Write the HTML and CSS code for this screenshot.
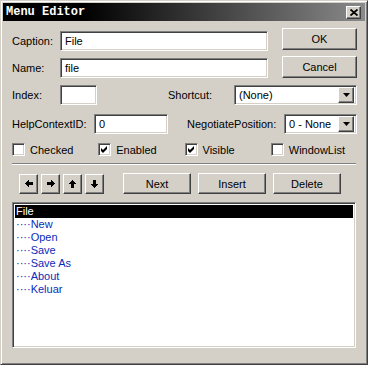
FILE: index.html
```html
<!DOCTYPE html>
<html lang="en">
<head>
  <meta charset="UTF-8">
  <title>Menu Editor</title>
  <link rel="stylesheet" href="styles.css">
</head>
<body>

<div class="window">
  <!-- Title bar -->
  <div class="titlebar">
    <span class="title">Menu Editor</span>
    <span class="close raised">
      <svg width="8" height="7" viewBox="0 0 8 7"><path d="M0.5 0.5 L7.5 6.5 M7.5 0.5 L0.5 6.5" stroke="#000" stroke-width="1.8"/></svg>
    </span>
  </div>

  <div class="content">
    <!-- Caption / Name + OK / Cancel -->
    <div class="row-top">
      <div class="fields">
        <div class="field">
          <span class="lbl lbl-cap">Caption:</span>
          <div class="edit sunken edit-cap">File</div>
        </div>
        <div class="field">
          <span class="lbl lbl-cap">Name:</span>
          <div class="edit sunken edit-cap">file</div>
        </div>
      </div>
      <div class="btn-col">
        <div class="btn raised btn-big">OK</div>
        <div class="btn raised btn-big">Cancel</div>
      </div>
    </div>

    <!-- Index / Shortcut -->
    <div class="row row-index">
      <span class="lbl lbl-cap">Index:</span>
      <div class="edit sunken edit-index"></div>
      <span class="lbl lbl-short">Shortcut:</span>
      <div class="combo sunken combo-short">
        <span class="combo-text">(None)</span>
        <span class="drop raised">
          <svg width="7" height="4" viewBox="0 0 7 4"><path d="M0 0 H7 L3.5 4 Z"/></svg>
        </span>
      </div>
    </div>

    <!-- HelpContextID / NegotiatePosition -->
    <div class="row row-help">
      <span class="lbl lbl-help">HelpContextID:</span>
      <div class="edit sunken edit-help">0</div>
      <span class="lbl lbl-neg">NegotiatePosition:</span>
      <div class="combo sunken combo-neg">
        <span class="combo-text">0 - None</span>
        <span class="drop raised">
          <svg width="7" height="4" viewBox="0 0 7 4"><path d="M0 0 H7 L3.5 4 Z"/></svg>
        </span>
      </div>
    </div>

    <!-- Checkboxes -->
    <div class="row row-checks">
      <div class="check"><span class="box sunken"></span>Checked</div>
      <div class="check"><span class="box sunken"><svg width="7" height="7" viewBox="0 0 7 7"><path d="M0 2 L2 4 L6 0 V3 L2 7 L0 5 Z"/></svg></span>Enabled</div>
      <div class="check"><span class="box sunken"><svg width="7" height="7" viewBox="0 0 7 7"><path d="M0 2 L2 4 L6 0 V3 L2 7 L0 5 Z"/></svg></span>Visible</div>
      <div class="check"><span class="box sunken"></span>WindowList</div>
    </div>

    <div class="separator"></div>

    <!-- Arrow buttons and Next / Insert / Delete -->
    <div class="row row-buttons">
      <div class="arrows">
        <div class="btn raised btn-arrow"><svg width="8" height="7" viewBox="0 0 8 7" shape-rendering="crispEdges"><path d="M0 3.5 L4 0 V2 H8 V5 H4 V7 Z"/></svg></div>
        <div class="btn raised btn-arrow"><svg width="8" height="7" viewBox="0 0 8 7" shape-rendering="crispEdges"><path d="M8 3.5 L4 0 V2 H0 V5 H4 V7 Z"/></svg></div>
        <div class="btn raised btn-arrow"><svg width="7" height="8" viewBox="0 0 7 8" shape-rendering="crispEdges"><path d="M3.5 0 L7 4 H5 V8 H2 V4 H0 Z"/></svg></div>
        <div class="btn raised btn-arrow"><svg width="7" height="8" viewBox="0 0 7 8" shape-rendering="crispEdges"><path d="M3.5 8 L7 4 H5 V0 H2 V4 H0 Z"/></svg></div>
      </div>
      <div class="actions">
        <div class="btn raised btn-mid">Next</div>
        <div class="btn raised btn-mid">Insert</div>
        <div class="btn raised btn-mid">Delete</div>
      </div>
    </div>

    <!-- Menu list -->
    <div class="list sunken">
      <div class="item selected">File</div>
      <div class="item">····New</div>
      <div class="item">····Open</div>
      <div class="item">····Save</div>
      <div class="item">····Save As</div>
      <div class="item">····About</div>
      <div class="item">····Keluar</div>
    </div>
  </div>
</div>

</body>
</html>
```

FILE: styles.css
```css
/* Reset */
html, body {
  margin: 0;
  padding: 0;
  background: #ffffff;
}

* {
  box-sizing: border-box;
}

/* Window frame */
.window {
  width: 368px;
  height: 365px;
  background: #d4d0c8;
  border: 1px solid;
  border-color: #d4d0c8 #404040 #404040 #d4d0c8;
  box-shadow: inset 1px 1px #ffffff, inset -1px -1px #808080;
  padding: 2px;
  font-family: "Liberation Sans", Arial, sans-serif;
  font-size: 11px;
  color: #000000;
}

/* 3D borders */
.raised {
  background: #d4d0c8;
  border: 1px solid;
  border-color: #ffffff #404040 #404040 #ffffff;
  box-shadow: inset -1px -1px #808080;
}

.sunken {
  background: #ffffff;
  border: 1px solid;
  border-color: #808080 #ffffff #ffffff #808080;
  box-shadow: inset 1px 1px #404040, inset -1px -1px #d4d0c8;
}

/* Title bar */
.titlebar {
  height: 18px;
  display: flex;
  align-items: center;
  justify-content: space-between;
  background: linear-gradient(to right, #000000 22%, #8a8a8a 100%);
  padding: 0 4px 0 3px;
}

.title {
  font-family: "Liberation Mono", monospace;
  font-weight: bold;
  font-size: 12px;
  color: #ffffff;
}

.close {
  width: 15px;
  height: 13px;
  display: flex;
  align-items: center;
  justify-content: center;
}

/* Content area */
.content {
  padding: 7px 8px 0 9px;
}

.row {
  display: flex;
  align-items: center;
}

.lbl {
  white-space: nowrap;
}

.lbl-cap { width: 48px; }
.lbl-help { width: 82px; }
.lbl-short { width: 66px; margin-left: 71px; }
.lbl-neg { width: 97px; margin-left: 19px; }

.edit {
  height: 20px;
  padding: 0 4px;
  display: flex;
  align-items: center;
}

.edit-cap { width: 208px; }
.edit-index { width: 37px; }
.edit-help { width: 74px; }

/* Caption / Name block */
.row-top {
  display: flex;
  justify-content: space-between;
}

.fields {
  display: flex;
  flex-direction: column;
  gap: 7px;
  padding-top: 3px;
}

.field {
  display: flex;
  align-items: center;
}

.btn-col {
  display: flex;
  flex-direction: column;
  gap: 6px;
}

.btn {
  display: flex;
  align-items: center;
  justify-content: center;
}

.btn-big {
  width: 75px;
  height: 22px;
}

/* Combo boxes */
.combo {
  height: 20px;
  display: flex;
  align-items: center;
  justify-content: space-between;
  padding: 2px 2px 2px 4px;
}

.combo-short { width: 123px; }
.combo-neg { width: 73px; }

.drop {
  width: 16px;
  height: 16px;
  display: flex;
  align-items: center;
  justify-content: center;
}

.row-index { margin-top: 7px; }
.row-help { margin-top: 9px; }

/* Checkboxes */
.row-checks { margin-top: 9px; }

.check {
  width: 87px;
  display: flex;
  align-items: center;
}

.box {
  width: 13px;
  height: 13px;
  margin-right: 5px;
  display: flex;
  align-items: center;
  justify-content: center;
}

.separator {
  margin-top: 7px;
  width: 344px;
  height: 2px;
  border-top: 1px solid #808080;
  border-bottom: 1px solid #ffffff;
}

/* Button row */
.row-buttons { margin-top: 8px; }

.arrows {
  display: flex;
  gap: 3px;
  margin-left: 7px;
}

.btn-arrow {
  width: 19px;
  height: 20px;
}

.actions {
  display: flex;
  gap: 7px;
  margin-left: 19px;
}

.btn-mid {
  width: 68px;
  height: 21px;
}

/* List */
.list {
  margin-top: 8px;
  width: 344px;
  height: 146px;
  padding: 2px;
}

.item {
  height: 13px;
  line-height: 13px;
  padding-left: 1px;
  color: #0a2cb8;
  white-space: pre;
}

.item.selected {
  background: #000000;
  color: #ffffff;
}
```
